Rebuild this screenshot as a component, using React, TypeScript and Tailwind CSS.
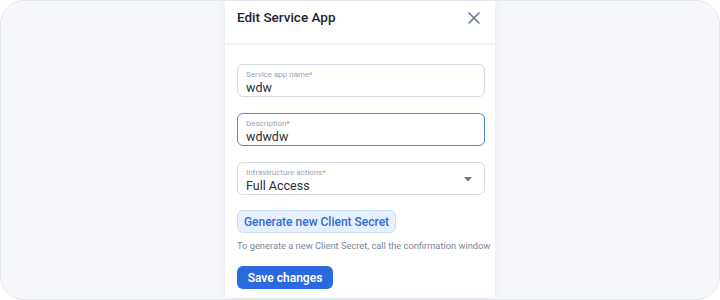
import React from "react";

function Field({ label, value, focused, select }: { label: string; value: string; focused?: boolean; select?: boolean }) {
  return (
    <div
      className={`relative h-[33px] w-[248px] rounded-[6px] border bg-white pl-[8px] ${
        focused ? "border-[#4d86e6]" : "border-[#d3dae6]"
      }`}
    >
      <div className="pt-[5px] text-[8px] leading-[10px] text-[#9aa3b2]">
        {label}
        <span className="text-[#f08a3c]">*</span>
      </div>
      <div className="text-[12.5px] leading-[15px] text-[#2a2f38]">{value}</div>
      {select && (
        <svg className="absolute right-[12px] top-[14px]" width="8" height="5" viewBox="0 0 8 5">
          <path d="M0 0 L8 0 L4 4.5 Z" fill="#6b7586" />
        </svg>
      )}
    </div>
  );
}

export default function App() {
  return (
    <div className="h-[300px] w-[720px] bg-white" style={{ fontFamily: "Roboto, 'Noto Sans', sans-serif" }}>
      <div className="flex h-[300px] w-[720px] justify-center overflow-hidden rounded-[24px] border border-[#e3e6ee] bg-[#f6f7fb]">
        <div className="flex h-[297px] w-[270px] flex-col bg-white shadow-[0_0_8px_rgba(30,40,70,0.08)]">
          <div className="flex h-[44px] shrink-0 items-start justify-between border-b-2 border-[#eef1f6] pl-[12px] pr-[15px] pt-[7px]">
            <div className="text-[13.5px] font-medium leading-[18px] text-[#1e2430]">Edit Service App</div>
            <svg className="mt-[4px]" width="12" height="12" viewBox="0 0 12 12">
              <path d="M1 1 L11 11 M11 1 L1 11" stroke="#6b7a90" strokeWidth="1.6" strokeLinecap="round" />
            </svg>
          </div>
          <div className="flex flex-col pl-[12px] pt-[19px]">
            <Field label="Service app name" value="wdw" />
            <div className="mt-[16px]">
              <Field label="Description" value="wdwdw" focused />
            </div>
            <div className="mt-[16px]">
              <Field label="Infrastructure actions" value="Full Access" select />
            </div>
            <button className="mt-[15px] flex h-[23px] w-[159px] items-center justify-center rounded-[6px] border border-[#c9def8] bg-[#e7f1fd] text-[12px] font-medium text-[#2f6cd6]">
              Generate new Client Secret
            </button>
            <div className="mt-[7px] whitespace-nowrap text-[9.3px] leading-[12px] text-[#7d8798]">
              To generate a new Client Secret, call the confirmation window
            </div>
            <button className="mt-[14px] flex h-[23px] w-[96px] items-center justify-center rounded-[6px] bg-[#2a6ade] text-[12px] font-semibold text-white">
              Save changes
            </button>
          </div>
        </div>
      </div>
    </div>
  );
}
